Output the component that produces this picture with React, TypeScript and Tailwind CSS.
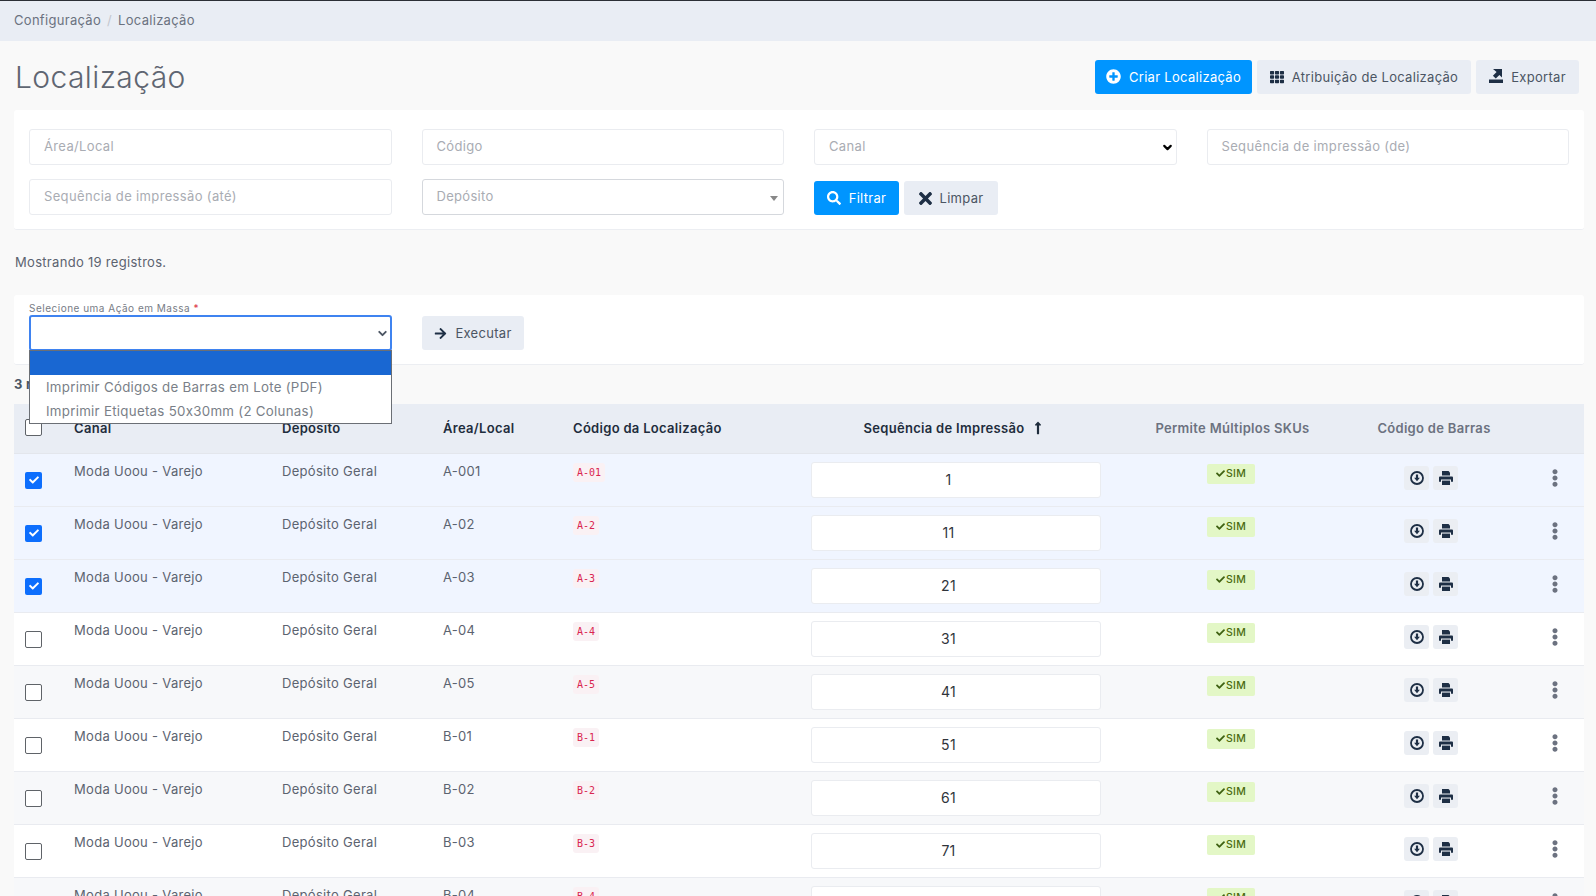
import { ChevronDown } from 'lucide-react';
import {
  FaArrowRight,
  FaCheck,
  FaEllipsisV,
  FaLongArrowAltUp,
  FaPlusCircle,
  FaSearch,
  FaTh,
  FaTimes,
} from 'react-icons/fa';

const rows = [
  { area: 'A-001', code: 'A-01', seq: 1, selected: true },
  { area: 'A-02', code: 'A-2', seq: 11, selected: true },
  { area: 'A-03', code: 'A-3', seq: 21, selected: true },
  { area: 'A-04', code: 'A-4', seq: 31, selected: false },
  { area: 'A-05', code: 'A-5', seq: 41, selected: false },
  { area: 'B-01', code: 'B-1', seq: 51, selected: false },
  { area: 'B-02', code: 'B-2', seq: 61, selected: false },
  { area: 'B-03', code: 'B-3', seq: 71, selected: false },
  { area: 'B-04', code: 'B-4', seq: 81, selected: false },
];

function ExportIcon() {
  return (
    <svg viewBox="0 0 14 14" className="h-[14px] w-[14px]" fill="#1e2f45">
      <path d="M0 10.5h14V14H0z" />
      <path d="M4 0h9v8.5L10.4 6 6.8 9.6 3.9 6.8 7.6 3.1z" />
    </svg>
  );
}

function DownloadCircleIcon() {
  return (
    <svg viewBox="0 0 14 14" className="h-[14px] w-[14px]">
      <circle cx="7" cy="7" r="6" fill="none" stroke="#1e2f45" strokeWidth="1.8" />
      <path d="M5.9 3.4h2.2v3.4h1.8L7 10.2 4.1 6.8h1.8z" fill="#1e2f45" />
    </svg>
  );
}

function PrintIcon() {
  return (
    <svg viewBox="0 0 14 14" className="h-[14px] w-[14px]" fill="#1e2f45">
      <path d="M3 0h6.5L11 1.5V4.6H3z" />
      <path d="M1.2 5.4h11.6c.7 0 1.2.5 1.2 1.2v4.2h-2V8.6H2v2.2H0V6.6c0-.7.5-1.2 1.2-1.2z" />
      <path d="M3 9.6h8V14H3z" />
    </svg>
  );
}

function FilterInput({ placeholder }: { placeholder: string }) {
  return (
    <div className="h-[36px] rounded-[3px] border border-[#eaecf0] bg-white px-[14px] text-[13px] leading-[33px] tracking-[0.35px] text-[#a9acb3]">
      {placeholder}
    </div>
  );
}

function Row({ row, index }: { row: (typeof rows)[number]; index: number }) {
  const bg = row.selected ? 'bg-[#f0f5ff]' : index % 2 === 0 ? 'bg-[#f7f8fa]' : 'bg-white';
  return (
    <tr className={`h-[53px] border-b border-[#e9ebf0] align-top ${bg}`}>
      <td className="pl-[11px] pt-[18px]">
        {row.selected ? (
          <div className="flex h-[17px] w-[17px] items-center justify-center rounded-[2px] bg-[#0d6efd] text-white">
            <FaCheck className="h-[10px] w-[10px]" />
          </div>
        ) : (
          <div className="h-[17px] w-[17px] rounded-[2px] border border-[#5f6368] bg-white" />
        )}
      </td>
      <td className="pl-[4px] pt-[8px]">Moda Uoou - Varejo</td>
      <td className="pl-[4px] pt-[8px]">Depósito Geral</td>
      <td className="pl-[4px] pt-[8px]">{row.area}</td>
      <td className="pl-[4px] pt-[8px]">
        <code className="inline-block rounded-[3px] bg-[#faf1f4] px-[4px] py-[3px] font-['DejaVu_Sans_Mono',monospace] text-[10px] leading-[13px] tracking-normal text-[#d92550]">
          {row.code}
        </code>
      </td>
      <td className="pt-[8px]">
        <div className="flex h-[36px] w-[290px] items-center justify-center rounded-[3px] border border-[#eaecf0] bg-white pr-[15px] text-[14px] text-[#30343b]">
          {row.seq}
        </div>
      </td>
      <td className="pt-[10px] text-center">
        <span className="mr-[3px] inline-flex h-[20px] items-center gap-[1px] rounded-[2px] bg-[#e3f7c6] px-[9px] text-[10.5px] font-medium text-[#4a6b10]">
          <FaCheck className="h-[9px] w-[9px] text-[#3f6212]" />
          SIM
        </span>
      </td>
      <td className="pt-[12px]">
        <div className="flex justify-center gap-[4px] pr-[6px]">
          <div className="flex h-[24px] w-[25px] items-center justify-center rounded-[3px] bg-[#ebeef3]">
            <DownloadCircleIcon />
          </div>
          <div className="flex h-[24px] w-[25px] items-center justify-center rounded-[3px] bg-[#ebeef3]">
            <PrintIcon />
          </div>
        </div>
      </td>
      <td className="pt-[15px] text-[#6c7280]">
        <FaEllipsisV className="ml-[22px] h-[18px] w-[8px]" />
      </td>
    </tr>
  );
}

export default function App() {
  return (
    <div className="h-screen overflow-hidden border-t border-[#2b2f36] bg-[#f9f9f9] font-['Inter',sans-serif] text-[13px] tracking-[0.3px] text-[#5c6370]">
      {/* Breadcrumb */}
      <div className="flex h-[40px] items-center bg-[#e9edf4] px-[14px] text-[#6b7280]">
        <span>Configuração</span>
        <span className="mx-[6px] text-[#c3c7ce]">/</span>
        <span>Localização</span>
      </div>

      <div className="pl-[14px] pr-[12px]">
        {/* Title and actions */}
        <div className="flex h-[69px] items-center justify-between pt-[2px]">
          <h1 className="pl-[1px] pt-[1px] text-[30px] font-light tracking-[0.4px] text-[#5f6672]">Localização</h1>
          <div className="mr-[5px] flex gap-[5px] text-[#4b5563]">
            <button className="flex h-[34px] w-[157px] items-center justify-center gap-[8px] rounded-[3px] bg-[#0095ff] pt-[2px] text-white">
              <FaPlusCircle className="-mt-[2px] h-[15px] w-[15px]" />
              Criar Localização
            </button>
            <button className="flex h-[34px] w-[214px] items-center justify-center gap-[8px] rounded-[3px] bg-[#e9edf4] pt-[2px]">
              <FaTh className="-mt-[2px] h-[14px] w-[14px] text-[#1e2f45]" />
              Atribuição de Localização
            </button>
            <button className="flex h-[34px] w-[103px] items-center justify-center gap-[8px] rounded-[3px] bg-[#e9edf4] pt-[2px]">
              <span className="-mt-[3px]">
                <ExportIcon />
              </span>
              Exportar
            </button>
          </div>
        </div>

        {/* Filters */}
        <div className="grid h-[120px] grid-cols-4 content-start gap-x-[30px] gap-y-[14px] rounded-[3px] border-b border-[#eceef2] bg-white px-[15px] pt-[19px]">
          <FilterInput placeholder="Área/Local" />
          <FilterInput placeholder="Código" />
          <div className="relative">
            <FilterInput placeholder="Canal" />
            <ChevronDown className="absolute right-[3px] top-[12px] h-[13px] w-[13px] text-black" strokeWidth={4} />
          </div>
          <FilterInput placeholder="Sequência de impressão (de)" />
          <FilterInput placeholder="Sequência de impressão (até)" />
          <div className="relative">
            <div className="h-[36px] rounded-[3px] border border-[#d5d8dd] bg-white px-[14px] leading-[33px] text-[#a9acb3]">
              Depósito
            </div>
            <div className="absolute right-[6px] top-[17px] h-0 w-0 border-x-[4px] border-t-[5px] border-x-transparent border-t-[#888]" />
          </div>
          <div className="col-span-2 flex gap-[5px] pt-[2px]">
            <button className="flex h-[34px] w-[85px] items-center justify-center gap-[8px] rounded-[3px] bg-[#0095ff] pt-[2px] text-white">
              <FaSearch className="-mt-[2px] h-[14px] w-[14px]" />
              Filtrar
            </button>
            <button className="flex h-[34px] w-[94px] items-center justify-center gap-[8px] rounded-[3px] bg-[#e9edf4] pt-[2px] text-[#4b5563]">
              <FaTimes className="-mt-[2px] h-[19px] w-[13px] text-[#1e2f45]" />
              Limpar
            </button>
          </div>
        </div>

        <div className="flex h-[65px] items-center pl-[1px] pt-[1px]">Mostrando 19 registros.</div>

        {/* Bulk action */}
        <div className="relative flex h-[70px] items-start gap-[30px] rounded-[3px] border-b border-[#eceef2] bg-white px-[15px]">
          <div className="relative w-[363px] pt-[7px]">
            <div className="mb-[1px] text-[10px] leading-[12px] tracking-[0.5px] text-[#777c85]">
              Selecione uma Ação em Massa <span className="text-[#dc3545]">*</span>
            </div>
            <div className="relative h-[36px] rounded-[3px] border-2 border-[#3f83f0] bg-white">
              <ChevronDown className="absolute right-[1px] top-[10px] h-[13px] w-[13px] text-[#4b5563]" strokeWidth={3.5} />
            </div>
            {/* Open native-style list */}
            <div className="absolute left-0 top-[55px] z-10 w-full border border-[#6b6f75] bg-white text-[13.3px] tracking-[0.28px] text-[#7a7f88]">
              <div className="h-[24px] bg-[#1967d2]" />
              <div className="h-[24px] pl-[16px] leading-[24px]">Imprimir Códigos de Barras em Lote (PDF)</div>
              <div className="h-[24px] pl-[16px] leading-[24px]">Imprimir Etiquetas 50x30mm (2 Colunas)</div>
            </div>
          </div>
          <button className="mt-[21px] flex h-[34px] w-[102px] items-center justify-center gap-[8px] rounded-[3px] bg-[#e9edf4] pt-[2px] text-[#4b5563]">
            <FaArrowRight className="-mt-[2px] h-[13px] w-[13px] text-[#1e2f45]" />
            Executar
          </button>
        </div>

        <div className="flex h-[39px] items-center font-bold text-[#4b5563]">
          3 registros selecionados
        </div>

        {/* Table */}
        <table className="w-full table-fixed border-collapse">
          <colgroup>
            <col className="w-[56px]" />
            <col className="w-[208px]" />
            <col className="w-[161px]" />
            <col className="w-[130px]" />
            <col className="w-[242px]" />
            <col className="w-[315px]" />
            <col className="w-[213px]" />
            <col className="w-[190px]" />
            <col />
          </colgroup>
          <thead>
            <tr className="h-[49px] border-b border-[#e3e6ec] bg-[#e9edf4] text-left align-middle font-semibold text-[#1f2d3d]">
              <th className="pb-[2px] pl-[11px] align-top font-semibold">
                <div className="mt-[15px] h-[17px] w-[17px] rounded-[2px] border border-[#5f6368] bg-white" />
              </th>
              <th className="pl-[4px] font-semibold">Canal</th>
              <th className="pl-[4px] font-semibold">Depósito</th>
              <th className="pl-[4px] font-semibold">Área/Local</th>
              <th className="pl-[4px] font-semibold">Código da Localização</th>
              <th className="font-semibold">
                <div className="flex w-[290px] items-center justify-center gap-[7px] pr-[3px]">
                  Sequência de Impressão
                  <FaLongArrowAltUp className="h-[14px] w-[14px]" />
                </div>
              </th>
              <th className="text-center font-semibold text-[#6c7280]">Permite Múltiplos SKUs</th>
              <th className="text-center font-semibold text-[#6c7280]">Código de Barras</th>
              <th />
            </tr>
          </thead>
          <tbody>
            {rows.map((row, i) => (
              <Row key={row.area} row={row} index={i} />
            ))}
          </tbody>
        </table>
      </div>
    </div>
  );
}
